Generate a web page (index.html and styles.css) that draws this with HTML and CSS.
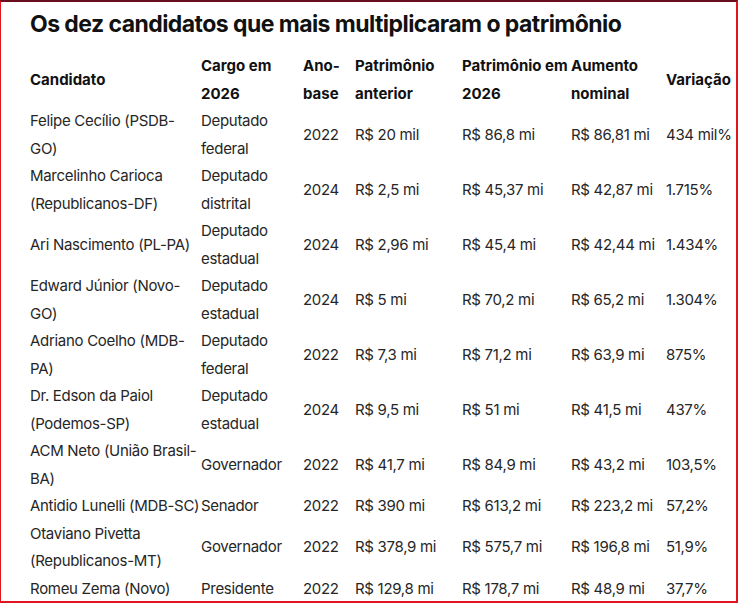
FILE: index.html
```html
<!DOCTYPE html>
<html lang="pt-BR">
<head>
<meta charset="utf-8">
<title>Os dez candidatos que mais multiplicaram o patrimônio</title>
<link rel="stylesheet" href="styles.css">
</head>
<body>
<div class="frame">
  <h2 class="title">Os dez candidatos que mais multiplicaram o patrimônio</h2>
  <table class="data">
    <colgroup>
      <col class="c1"><col class="c2"><col class="c3"><col class="c4"><col class="c5"><col class="c6"><col class="c7">
    </colgroup>
    <thead>
      <tr><th>Candidato</th><th>Cargo em 2026</th><th>Ano-base</th><th>Patrimônio anterior</th><th>Patrimônio em 2026</th><th>Aumento nominal</th><th>Variação</th></tr>
    </thead>
    <tbody>
      <tr><td>Felipe Cecílio (PSDB-GO)</td><td>Deputado federal</td><td>2022</td><td>R$ 20 mil</td><td>R$ 86,8 mi</td><td>R$ 86,81 mi</td><td>434 mil%</td></tr>
      <tr><td>Marcelinho Carioca (Republicanos-DF)</td><td>Deputado distrital</td><td>2024</td><td>R$ 2,5 mi</td><td>R$ 45,37 mi</td><td>R$ 42,87 mi</td><td>1.715%</td></tr>
      <tr><td>Ari Nascimento (PL-PA)</td><td>Deputado estadual</td><td>2024</td><td>R$ 2,96 mi</td><td>R$ 45,4 mi</td><td>R$ 42,44 mi</td><td>1.434%</td></tr>
      <tr><td>Edward Júnior (Novo-GO)</td><td>Deputado estadual</td><td>2024</td><td>R$ 5 mi</td><td>R$ 70,2 mi</td><td>R$ 65,2 mi</td><td>1.304%</td></tr>
      <tr><td>Adriano Coelho (MDB-PA)</td><td>Deputado federal</td><td>2022</td><td>R$ 7,3 mi</td><td>R$ 71,2 mi</td><td>R$ 63,9 mi</td><td>875%</td></tr>
      <tr><td>Dr. Edson da Paiol (Podemos-SP)</td><td>Deputado estadual</td><td>2024</td><td>R$ 9,5 mi</td><td>R$ 51 mi</td><td>R$ 41,5 mi</td><td>437%</td></tr>
      <tr><td>ACM Neto (União Brasil-BA)</td><td>Governador</td><td>2022</td><td>R$ 41,7 mi</td><td>R$ 84,9 mi</td><td>R$ 43,2 mi</td><td>103,5%</td></tr>
      <tr><td>Antidio Lunelli (MDB-SC)</td><td>Senador</td><td>2022</td><td>R$ 390 mi</td><td>R$ 613,2 mi</td><td>R$ 223,2 mi</td><td>57,2%</td></tr>
      <tr><td>Otaviano Pivetta (Republicanos-MT)</td><td>Governador</td><td>2022</td><td>R$ 378,9 mi</td><td>R$ 575,7 mi</td><td>R$ 196,8 mi</td><td>51,9%</td></tr>
      <tr><td>Romeu Zema (Novo)</td><td>Presidente</td><td>2022</td><td>R$ 129,8 mi</td><td>R$ 178,7 mi</td><td>R$ 48,9 mi</td><td>37,7%</td></tr>
    </tbody>
  </table>
</div>
</body>
</html>
```
FILE: styles.css
```css
html, body {
  margin: 0;
  padding: 0;
  background: #ffffff;
}
body {
  width: 739px;
  height: 604px;
  overflow: hidden;
  font-family: Inter, "Liberation Sans", sans-serif;
  color: #1c1c1c;
}
.frame {
  box-sizing: border-box;
  width: 738px;
  height: 603px;
  border-top: 2px solid #6a0d1e;
  border-left: 1px solid #e3141f;
  border-right: 2px solid #e3141f;
  border-bottom: 2px solid #e3141f;
  padding: 0 0 0 29px;
  overflow: hidden;
}
.title {
  margin: 8px 0 0 0;
  font-size: 23px;
  line-height: 28px;
  font-weight: 700;
  letter-spacing: -0.56px;
  color: #111111;
}
.data {
  margin-top: 14px;
  border-collapse: collapse;
  table-layout: fixed;
  width: 706px;
  font-size: 15px;
  line-height: 27.5px;
}
.c1 { width: 171px; }
.c2 { width: 102px; }
.c3 { width: 52px; }
.c4 { width: 107px; }
.c5 { width: 109px; }
.c6 { width: 95px; }
.c7 { width: 70px; }
.data th, .data td {
  padding: 0;
  text-align: left;
  vertical-align: middle;
}
.data th {
  font-weight: 700;
  color: #111111;
}
.data td {
  font-weight: 400;
  color: #262626;
  letter-spacing: -0.3px;
}
```
